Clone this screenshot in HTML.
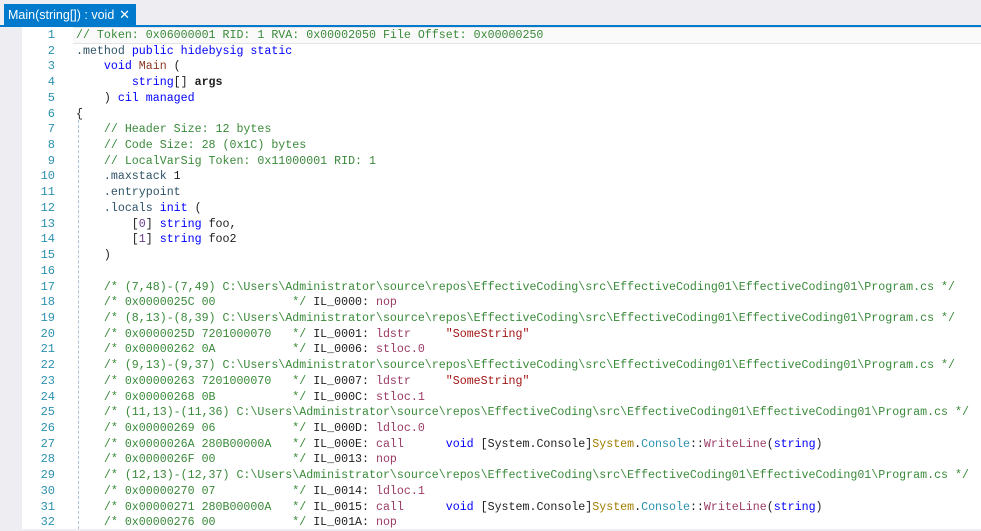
<!DOCTYPE html>
<html><head><meta charset="utf-8"><style>
body{margin:0;width:981px;height:529px;overflow:hidden;background:#eeeef2;font-family:"Liberation Sans",sans-serif;position:relative}
.tab{position:absolute;left:4px;top:4px;width:132px;height:22px;background:#007acc;color:#fff;font-size:12.5px;line-height:22px;padding-left:4px;box-sizing:border-box;white-space:nowrap}
.tab span{position:absolute;right:6px;top:0;font-size:13px}
.bar{position:absolute;left:0;top:25px;width:981px;height:2px;background:#007acc}
.ed{position:absolute;left:22px;top:27px;width:959px;height:502px;background:#fff}
.hl{position:absolute;left:73px;top:27px;width:908px;height:17px;background:#fafafa;border-top:1px solid #e4e4e4;border-bottom:1px solid #e4e4e4;box-sizing:border-box}
.guide{position:absolute;left:78px;top:120px;height:409px;border-left:1px dashed #a8c4dc}
.nums{position:absolute;left:22px;top:28px;width:33px;text-align:right;font-family:"Liberation Mono",monospace;font-size:12px;line-height:15.72px;color:#2b91af}
pre{position:absolute;left:76px;top:28px;margin:0;font-family:"Liberation Mono",monospace;font-size:11.64px;line-height:15.72px;color:#1e1e1e}
.c{color:#3a8a3a}.k{color:#0000ff}.d{color:#2f5468}.m{color:#8b3a22}.o{color:#9a3b65}.s{color:#a31515}.y{color:#a07d00}.t{color:#2b91af}.p{color:#6a3c8a}.b{font-weight:bold}
</style></head><body>
<div class="tab">Main(string[]) : void<span>✕</span></div>
<div class="bar"></div>
<div class="ed"></div>
<div class="hl"></div>
<div class="guide"></div>
<div class="nums">1<br>2<br>3<br>4<br>5<br>6<br>7<br>8<br>9<br>10<br>11<br>12<br>13<br>14<br>15<br>16<br>17<br>18<br>19<br>20<br>21<br>22<br>23<br>24<br>25<br>26<br>27<br>28<br>29<br>30<br>31<br>32</div>
<pre><span class="c">// Token: 0x06000001 RID: 1 RVA: 0x00002050 File Offset: 0x00000250</span>
<span class="d">.method</span> <span class="k">public hidebysig static</span>
    <span class="k">void</span> <span class="m">Main</span> (
        <span class="k">string</span>[] <span class="b">args</span>
    ) <span class="k">cil managed</span>
{
    <span class="c">// Header Size: 12 bytes</span>
    <span class="c">// Code Size: 28 (0x1C) bytes</span>
    <span class="c">// LocalVarSig Token: 0x11000001 RID: 1</span>
    <span class="d">.maxstack</span> 1
    <span class="d">.entrypoint</span>
    <span class="d">.locals</span> <span class="k">init</span> (
        [<span class="p">0</span>] <span class="k">string</span> foo,
        [<span class="p">1</span>] <span class="k">string</span> foo2
    )

    <span class="c">/* (7,48)-(7,49) C:\Users\Administrator\source\repos\EffectiveCoding\src\EffectiveCoding01\EffectiveCoding01\Program.cs */</span>
    <span class="c">/* 0x0000025C 00           */</span> IL_0000: <span class="o">nop</span>
    <span class="c">/* (8,13)-(8,39) C:\Users\Administrator\source\repos\EffectiveCoding\src\EffectiveCoding01\EffectiveCoding01\Program.cs */</span>
    <span class="c">/* 0x0000025D 7201000070   */</span> IL_0001: <span class="o">ldstr</span>     <span class="s">"SomeString"</span>
    <span class="c">/* 0x00000262 0A           */</span> IL_0006: <span class="o">stloc.0</span>
    <span class="c">/* (9,13)-(9,37) C:\Users\Administrator\source\repos\EffectiveCoding\src\EffectiveCoding01\EffectiveCoding01\Program.cs */</span>
    <span class="c">/* 0x00000263 7201000070   */</span> IL_0007: <span class="o">ldstr</span>     <span class="s">"SomeString"</span>
    <span class="c">/* 0x00000268 0B           */</span> IL_000C: <span class="o">stloc.1</span>
    <span class="c">/* (11,13)-(11,36) C:\Users\Administrator\source\repos\EffectiveCoding\src\EffectiveCoding01\EffectiveCoding01\Program.cs */</span>
    <span class="c">/* 0x00000269 06           */</span> IL_000D: <span class="o">ldloc.0</span>
    <span class="c">/* 0x0000026A 280B00000A   */</span> IL_000E: <span class="o">call</span>      <span class="k">void</span> [System.Console]<span class="y">System</span>.<span class="t">Console</span>::<span class="o">WriteLine</span>(<span class="k">string</span>)
    <span class="c">/* 0x0000026F 00           */</span> IL_0013: <span class="o">nop</span>
    <span class="c">/* (12,13)-(12,37) C:\Users\Administrator\source\repos\EffectiveCoding\src\EffectiveCoding01\EffectiveCoding01\Program.cs */</span>
    <span class="c">/* 0x00000270 07           */</span> IL_0014: <span class="o">ldloc.1</span>
    <span class="c">/* 0x00000271 280B00000A   */</span> IL_0015: <span class="o">call</span>      <span class="k">void</span> [System.Console]<span class="y">System</span>.<span class="t">Console</span>::<span class="o">WriteLine</span>(<span class="k">string</span>)
    <span class="c">/* 0x00000276 00           */</span> IL_001A: <span class="o">nop</span></pre>
</body></html>
